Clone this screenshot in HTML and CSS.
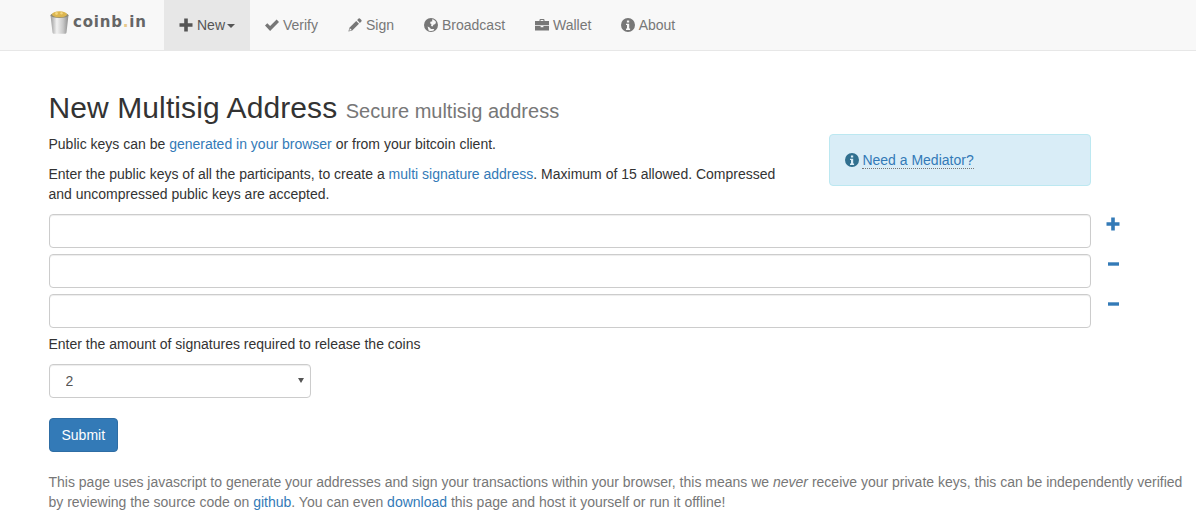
FILE: index.html
```html
<!DOCTYPE html>
<html lang="en">
<head>
    <meta charset="UTF-8">
    <meta name="viewport" content="width=device-width, initial-scale=1.0">
    <title>coinb.in | New Multisig Address</title>
    <link rel="stylesheet" href="styles.css">
</head>
<body>
    <svg class="sprite" width="0" height="0" aria-hidden="true">
        <defs>
            <linearGradient id="bucket-metal" x1="0" x2="1" y1="0" y2="0">
                <stop offset="0" stop-color="#9a9a9a"/>
                <stop offset="0.35" stop-color="#f2f2f2"/>
                <stop offset="0.7" stop-color="#c8c8c8"/>
                <stop offset="1" stop-color="#8c8c8c"/>
            </linearGradient>
        </defs>
        <symbol id="i-plus" viewBox="0 0 14 14"><path d="M5.2 .6h3.6v4.6h4.7v3.6H8.8v4.6H5.2V8.8H.5V5.2h4.7z"/></symbol>
        <symbol id="i-minus" viewBox="0 0 14 14"><path d="M2 5.300h11v3.400H2z"/></symbol>
        <symbol id="i-ok" viewBox="0 0 14 14"><path d="M0 7.600l2.300-2.300 2.800 2.800L11.600 1.600 14 4 5.100 12.900z"/></symbol>
        <symbol id="i-pencil" viewBox="0 0 14 14"><path d="M10.600 .6a1 1 0 0 1 1.300 0l1.500 1.500a1 1 0 0 1 0 1.300l-1.500 1.500-2.800-2.800zM8.200 3 11 5.800 4.200 12.600.4 13.600l1-3.800zM1.900 10.300l-.6 2.400 2.400-.6z"/></symbol>
        <symbol id="i-globe" viewBox="0 0 14 14"><path fill-rule="evenodd" d="M7 0a7 7 0 1 0 0 14A7 7 0 0 0 7 0zM8.200 1.300c1.600.3 3 1.300 3.800 2.600l-.7 2-1.800.8-1 1.800-1.400-.6.3-1.800-1.400-.8.7-1.700 1.500-.2zM3.600 8.600l2 .8 1.400 1.600 2.700.1.600 1c-1.800 1.200-4 1.200-5.700.3z"/></symbol>
        <symbol id="i-briefcase" viewBox="0 0 14 14"><path d="M4.500 3V2a1 1 0 0 1 1-1h3a1 1 0 0 1 1 1v1H14v4.200H0V3zM5.600 2.100V3h2.800v-.9zM0 8h5.600v1.200h2.800V8H14v4.600H0z"/></symbol>
        <symbol id="i-info" viewBox="0 0 14 14"><path fill-rule="evenodd" d="M7 0a7 7 0 1 0 0 14A7 7 0 0 0 7 0zM5.900 2.400h2.300v2.100H5.900zM5 5.700h3.200v4.900h.9V12H5v-1.400h1V7.100H5z"/></symbol>
    </svg>

    <nav class="navbar">
        <a class="brand" href="#">
            <svg class="brand-bucket" width="19" height="23" viewBox="0 0 19 23" aria-hidden="true">
                <path d="M.5 4h18l-2 17.500a1.500 1.500 0 0 1-1.500 1.300H4a1.500 1.500 0 0 1-1.500-1.300z" fill="url(#bucket-metal)"/>
                <ellipse cx="9.500" cy="4.300" rx="9" ry="2.600" fill="#8f8a74"/>
                <ellipse cx="9.500" cy="3.300" rx="7.500" ry="3" fill="#dcb650"/>
                <circle cx="6.500" cy="2.500" r="1.400" fill="#f3d67e"/>
                <circle cx="11.500" cy="2.200" r="1.200" fill="#f3d67e"/>
            </svg>
            <span class="brand-name">coinb<span class="brand-dot">.</span>in</span>
        </a>
        <ul class="nav">
            <li class="active"><a href="#"><svg class="icon"><use href="#i-plus"/></svg> New<span class="caret"></span></a></li>
            <li><a href="#"><svg class="icon"><use href="#i-ok"/></svg> Verify</a></li>
            <li><a href="#"><svg class="icon"><use href="#i-pencil"/></svg> Sign</a></li>
            <li><a href="#"><svg class="icon"><use href="#i-globe"/></svg> Broadcast</a></li>
            <li><a href="#"><svg class="icon"><use href="#i-briefcase"/></svg> Wallet</a></li>
            <li><a href="#"><svg class="icon"><use href="#i-info"/></svg> About</a></li>
        </ul>
    </nav>

    <main class="container">
        <h1>New Multisig Address <small>Secure multisig address</small></h1>

        <div class="intro">
            <div>
                <p>Public keys can be <a href="#">generated in your browser</a> or from your bitcoin client.</p>
                <p>Enter the public keys of all the participants, to create a <a href="#">multi signature address</a>. Maximum of 15 allowed. Compressed and uncompressed public keys are accepted.</p>
            </div>
            <div class="alert">
                <svg class="icon"><use href="#i-info"/></svg> <a class="mediator" href="#">Need a Mediator?</a>
            </div>
        </div>

        <div class="key-row">
            <input type="text" class="form-control">
            <a class="key-action" href="#"><svg class="icon"><use href="#i-plus"/></svg></a>
        </div>
        <div class="key-row">
            <input type="text" class="form-control">
            <a class="key-action" href="#"><svg class="icon"><use href="#i-minus"/></svg></a>
        </div>
        <div class="key-row">
            <input type="text" class="form-control">
            <a class="key-action" href="#"><svg class="icon"><use href="#i-minus"/></svg></a>
        </div>

        <label for="signatures">Enter the amount of signatures required to release the coins</label>
        <div class="select-wrap">
            <select id="signatures" class="form-control">
                <option>2</option>
                <option>3</option>
                <option>4</option>
            </select>
        </div>

        <button class="btn" type="button">Submit</button>

        <p class="notice">This page uses javascript to generate your addresses and sign your transactions within your browser, this means we <i>never</i> receive your private keys, this can be independently verified by reviewing the source code on <a href="#">github</a>. You can even <a href="#">download</a> this page and host it yourself or run it offline!</p>
    </main>
</body>
</html>
```

FILE: styles.css
```css
* {
    box-sizing: border-box;
}

body {
    font-family: 'Liberation Sans', Arial, sans-serif;
    font-size: 14px;
    line-height: 20px;
    color: #333;
    background-color: #fff;
    margin: 0;
}

a {
    color: #337ab7;
    text-decoration: none;
}

p {
    margin: 0 0 10px;
}

.sprite {
    position: absolute;
}

.icon {
    display: inline-block;
    width: 14px;
    height: 14px;
    fill: currentColor;
    vertical-align: -2px;
}

.navbar {
    display: flex;
    height: 51px;
    padding-left: 50px;
    background-color: #f8f8f8;
    border-bottom: 1px solid #e7e7e7;
}

.brand {
    display: flex;
    align-items: center;
    width: 114px;
    height: 50px;
    padding-bottom: 6px;
}

.brand-bucket {
    flex: none;
}

.brand-name {
    margin-left: 4px;
    font-family: 'DejaVu Sans', sans-serif;
    font-size: 15px;
    font-weight: bold;
    letter-spacing: 0.8px;
    color: #666;
}

.brand-dot {
    color: #e8c98a;
}

.nav {
    display: flex;
    list-style: none;
    margin: 0;
    padding: 0;
}

.nav a {
    display: block;
    padding: 15px;
    color: #777;
}

.nav .icon {
    margin-right: .1px;
}

.nav .active a {
    color: #555;
    background-color: #e7e7e7;
}

.caret {
    display: inline-block;
    margin-left: 2px;
    vertical-align: middle;
    border-top: 4px solid;
    border-left: 4px solid transparent;
    border-right: 4px solid transparent;
}

.container {
    padding: 40px 9px 0 48.5px;
}

h1 {
    font-size: 30px;
    font-weight: 500;
    line-height: 33px;
    letter-spacing: .1px;
    margin: 0 0 10px;
}

h1 small {
    font-size: 20px;
    font-weight: 400;
    line-height: 1;
    letter-spacing: 0;
    color: #777;
}

.intro {
    display: grid;
    grid-template-columns: 1fr 262px;
    column-gap: 30px;
    width: 1042px;
}

.alert {
    height: 52px;
    padding: 15px;
    color: #31708f;
    background-color: #d9edf7;
    border: 1px solid #bce8f1;
    border-radius: 4px;
}

.mediator {
    border-bottom: 1px dotted #777;
}

.key-row {
    display: flex;
    margin-bottom: 6px;
}

.form-control {
    display: block;
    width: 1042px;
    height: 34px;
    padding: 6px 12px;
    font-family: inherit;
    font-size: 14px;
    line-height: 20px;
    color: #555;
    background-color: #fff;
    border: 1px solid #ccc;
    border-radius: 4px;
    box-shadow: inset 0 1px 1px rgba(0, 0, 0, .075);
}

.key-action {
    height: 17px;
    margin-left: 15.5px;
    padding-top: 3px;
    line-height: 14px;
}

.key-action .icon {
    vertical-align: top;
}

label {
    display: block;
    margin-bottom: 10px;
}

.select-wrap {
    position: relative;
    width: 262px;
    margin-bottom: 20px;
}

.select-wrap select {
    width: 100%;
    padding-left: 16px;
    appearance: none;
}

.select-wrap::after {
    content: "";
    position: absolute;
    top: 14px;
    right: 7px;
    border-top: 5px solid #555;
    border-left: 3px solid transparent;
    border-right: 3px solid transparent;
    pointer-events: none;
}

.btn {
    display: block;
    width: 69px;
    height: 34px;
    margin-bottom: 20px;
    padding: 6px 12px;
    font-family: inherit;
    font-size: 14px;
    line-height: 20px;
    color: #fff;
    background-color: #337ab7;
    border: 1px solid #2e6da4;
    border-radius: 4px;
    cursor: pointer;
}

.notice {
    color: #777;
}
```
